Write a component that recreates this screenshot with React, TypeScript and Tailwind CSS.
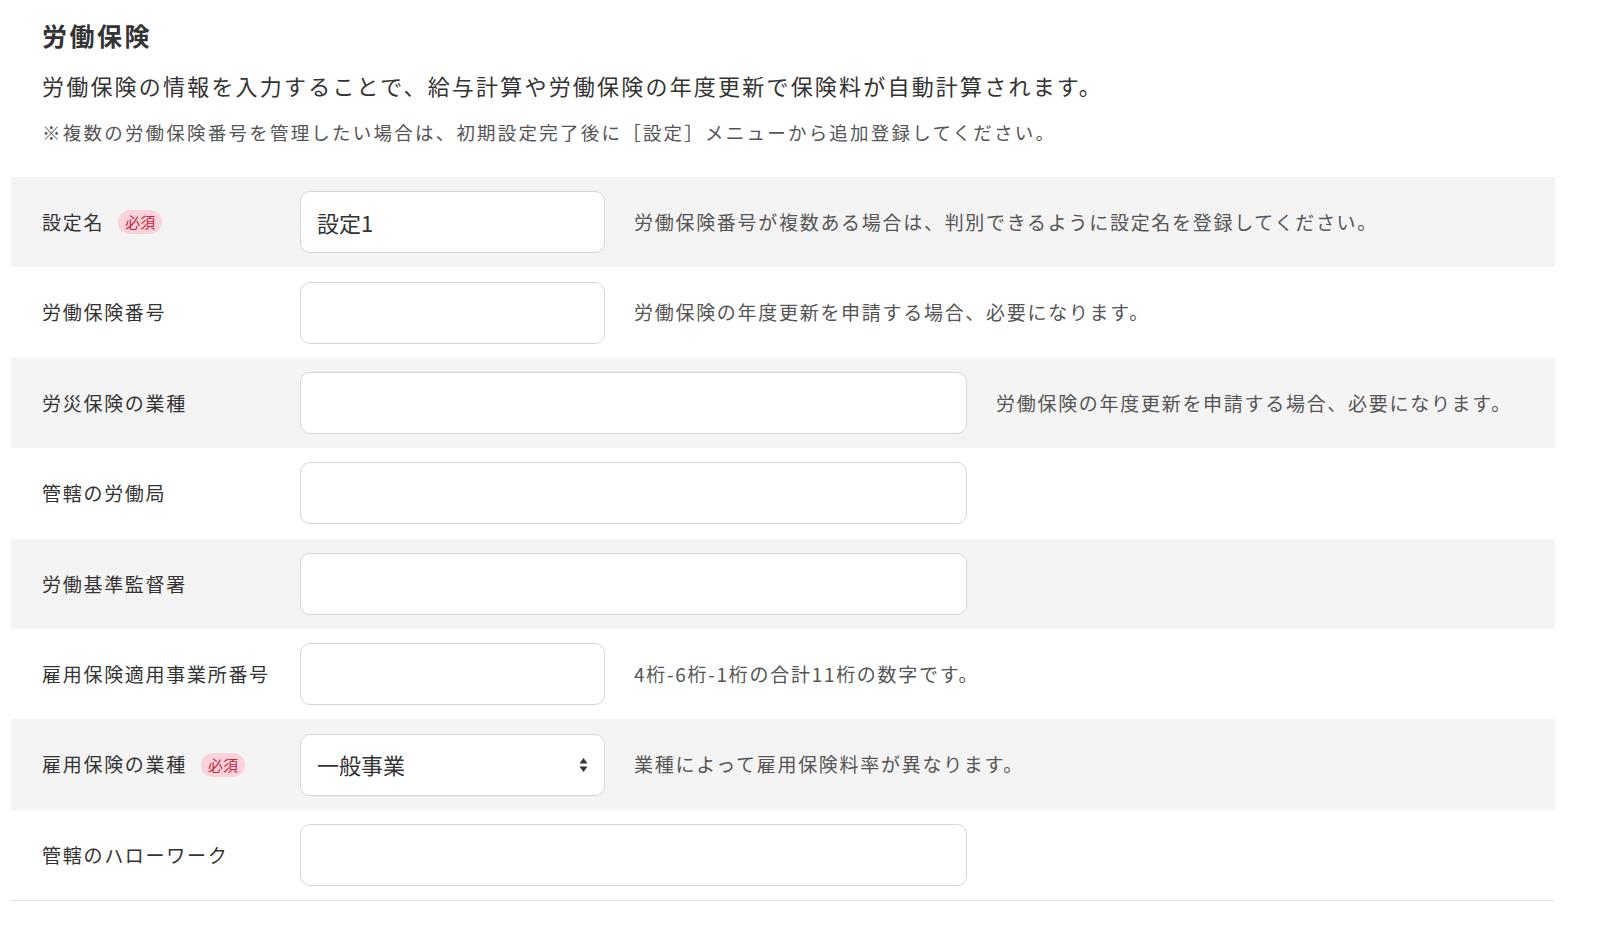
type Row = {
  label: string
  required?: boolean
  value?: string
  wide?: boolean
  select?: boolean
  help?: string
}

const rows: Row[] = [
  { label: '設定名', required: true, value: '設定1', help: '労働保険番号が複数ある場合は、判別できるように設定名を登録してください。' },
  { label: '労働保険番号', help: '労働保険の年度更新を申請する場合、必要になります。' },
  { label: '労災保険の業種', wide: true, help: '労働保険の年度更新を申請する場合、必要になります。' },
  { label: '管轄の労働局', wide: true },
  { label: '労働基準監督署', wide: true },
  { label: '雇用保険適用事業所番号', help: '4桁-6桁-1桁の合計11桁の数字です。' },
  { label: '雇用保険の業種', required: true, select: true, value: '一般事業', help: '業種によって雇用保険料率が異なります。' },
  { label: '管轄のハローワーク', wide: true },
]

export default function App() {
  return (
    <div className="bg-white h-screen overflow-hidden text-[#333] pt-[17px]" style={{ fontFamily: '"Noto Sans CJK JP", "Noto Sans", sans-serif' }}>
      <div className="px-[42px]">
        <h1 className="text-[25px] font-bold leading-[36px] tracking-[0.1em]">労働保険</h1>
        <p className="text-[22px] mt-[16px] leading-[32px] tracking-[0.1em]">労働保険の情報を入力することで、給与計算や労働保険の年度更新で保険料が自動計算されます。</p>
        <p className="text-[18.5px] mt-[18px] leading-[26px] text-[#555] tracking-[0.12em]">※複数の労働保険番号を管理したい場合は、初期設定完了後に［設定］メニューから追加登録してください。</p>
      </div>
      <div className="mx-[11px] mt-[32px] w-[1544px] border-b border-[#e5e5e5]">
        {rows.map((r, i) => (
          <div key={i} className={`flex items-center h-[90.4px] ${i % 2 === 0 ? 'bg-[#f5f4f4]' : 'bg-white'}`}>
            <div className="w-[289px] pl-[31px] flex items-center gap-[14px] text-[19px] tracking-[0.09em]">
              <span>{r.label}</span>
              {r.required && (
                <span className="bg-[#fbd3da] text-[#c8243d] text-[15px] leading-[24px] px-[7px] rounded-full tracking-normal">必須</span>
              )}
            </div>
            <div className={`${r.wide ? 'w-[667px]' : 'w-[305px]'} h-[62px] bg-white border border-[#d6d6d6] rounded-[10px] flex items-center px-[16px] text-[22px] justify-between`}>
              <span>{r.value}</span>
              {r.select && (
                <svg width="9" height="18" viewBox="0 0 9 18" className="fill-[#333]">
                  <polygon points="4.5,2 8.5,7.5 0.5,7.5" />
                  <polygon points="0.5,10.5 8.5,10.5 4.5,16" />
                </svg>
              )}
            </div>
            {r.help && <div className="ml-[29px] text-[19px] text-[#555] tracking-[0.09em]">{r.help}</div>}
          </div>
        ))}
      </div>
    </div>
  )
}
